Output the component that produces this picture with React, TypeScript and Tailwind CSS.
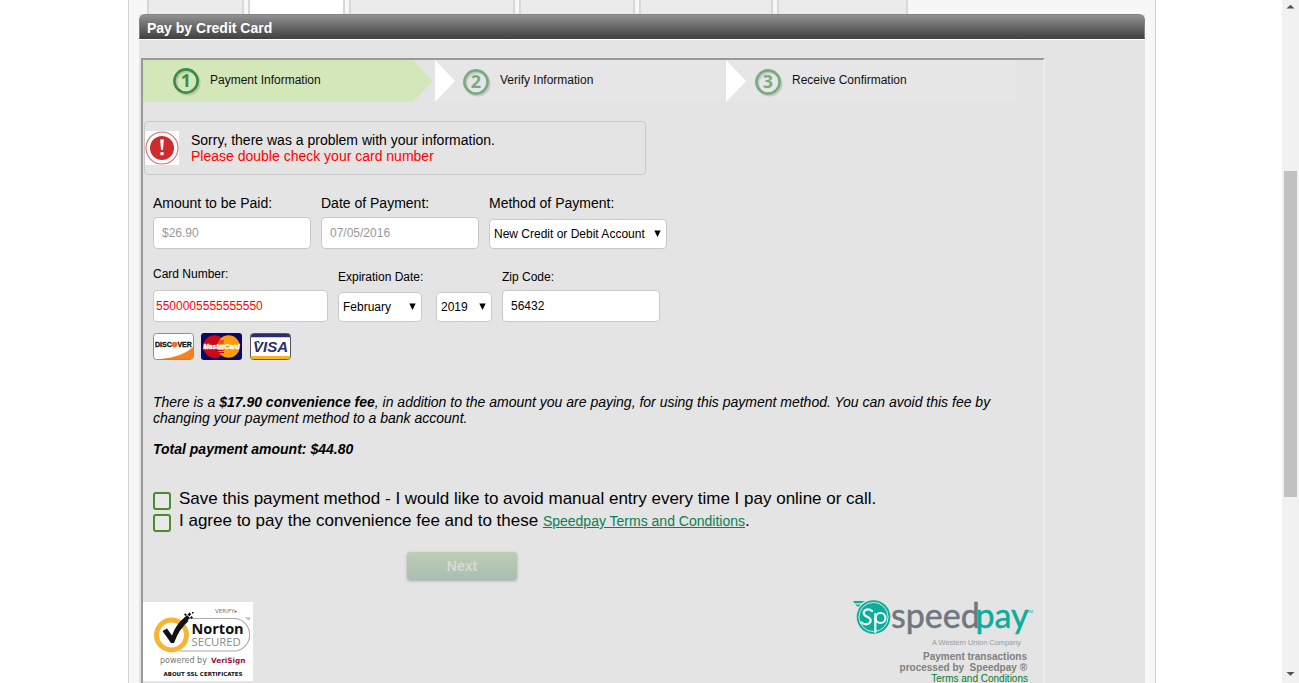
import React, { useState } from 'react';

const inputBase =
  'h-8 rounded border border-[#c9c9c9] bg-white text-[12px] leading-4 outline-none';

const tabs = [
  { id: 'tab-1', style: 'w-[97px] bg-[#ebebeb]' },
  { id: 'tab-2', style: 'w-[97px] bg-white' },
  { id: 'tab-3', style: 'w-[166px] bg-[#ebebeb]' },
  { id: 'tab-4', style: 'w-[116px] bg-[#ebebeb]' },
  { id: 'tab-5', style: 'w-[134px] bg-[#ebebeb]' },
  { id: 'tab-6', style: 'w-[131px] bg-[#ebebeb]' },
];

function StepNumber({ n, color }: { n: number; color: string }) {
  return (
    <svg width="30" height="30" viewBox="0 0 30 30" className="shrink-0" aria-hidden="true">
      <circle cx="15.5" cy="16.5" r="11.6" fill="none" stroke="#000" strokeOpacity="0.13" strokeWidth="3" />
      <circle cx="14" cy="15" r="11.6" fill="none" stroke={color} strokeWidth="2.6" />
      <text
        x="14"
        y="21.4"
        textAnchor="middle"
        fontFamily="Open Sans, Arial, sans-serif"
        fontWeight="700"
        fontSize="18"
        fill={color}
      >
        {n}
      </text>
    </svg>
  );
}

function StepArrow() {
  return (
    <svg width="20" height="42" viewBox="0 0 20 42" className="shrink-0" aria-hidden="true">
      <path d="M0 0L20 21L0 42Z" fill="#fff" />
    </svg>
  );
}

function Steps() {
  return (
    <ol className="flex h-[42px] gap-[2px] text-[12px] leading-4 text-[#111]">
      <li className="flex w-[290px] gap-[8px] bg-[#d4e7b9] pl-[29px] pt-[6px] [clip-path:polygon(0_0,270px_0,100%_50%,270px_100%,0_100%)]">
        <StepNumber n={1} color="#3d8b48" />
        <span className="pt-[6px]">Payment Information</span>
      </li>
      <li className="flex w-[289px] bg-[#e6e6e6]">
        <StepArrow />
        <div className="flex gap-[8px] pl-[7px] pt-[7px]">
          <StepNumber n={2} color="#78ab7e" />
          <span className="pt-[5px]">Verify Information</span>
        </div>
      </li>
      <li className="flex w-[289px] bg-[#e6e6e6]">
        <StepArrow />
        <div className="flex gap-[8px] pl-[8px] pt-[7px]">
          <StepNumber n={3} color="#78ab7e" />
          <span className="pt-[5px]">Receive Confirmation</span>
        </div>
      </li>
    </ol>
  );
}

function ErrorIcon() {
  return (
    <svg width="34" height="34" viewBox="0 0 34 34" className="shrink-0" aria-hidden="true">
      <rect width="34" height="34" fill="#fff" />
      <circle cx="17" cy="17" r="16" fill="none" stroke="#dd6b6d" strokeWidth="1.1" />
      <circle cx="17" cy="17" r="12" fill="#cf2a2e" />
      <path d="M15.2 8.5h3.6l-.8 10.6h-2z" fill="#fff" />
      <rect x="15.3" y="21" width="3.4" height="3.2" rx="1" fill="#fff" />
    </svg>
  );
}

type SelectProps = {
  id: string;
  label?: string;
  options: string[];
  value: string;
  width: string;
};

function Select({ id, label, options, value, width }: SelectProps) {
  const [current, setCurrent] = useState(value);
  return (
    <div className={`relative ${width}`}>
      <select
        id={id}
        aria-label={label}
        value={current}
        onChange={(e) => setCurrent(e.target.value)}
        className="block h-[30px] w-full appearance-none rounded border border-[#c9c9c9] bg-white pl-1 text-[12px] leading-4 text-black outline-none"
      >
        {options.map((o) => (
          <option key={o}>{o}</option>
        ))}
      </select>
      <svg width="7" height="7" viewBox="0 0 7 7" className="pointer-events-none absolute right-[6px] top-[11px]" aria-hidden="true">
        <path d="M0.3 0.5H6.7L3.5 7Z" fill="#000" />
      </svg>
    </div>
  );
}

function CardLogos() {
  return (
    <div className="mt-[11px] flex items-center gap-[7px]">
      <svg width="41" height="27" viewBox="0 0 41 27" role="img" aria-label="Discover">
        <rect x="0.5" y="0.5" width="40" height="26" rx="3" fill="#fff" stroke="#8d8d8d" />
        <path d="M8 26C22 24.6 33 20.5 40 14V24Q40 26 38 26Z" fill="#f58220" />
        <circle cx="21.6" cy="11.6" r="2.8" fill="#f07020" />
        <text x="2" y="14.2" fontFamily="Liberation Sans, Arial, sans-serif" fontWeight="700" fontSize="7" fill="#111" stroke="#111" strokeWidth="0.3">DISC</text>
        <text x="24.4" y="14.2" fontFamily="Liberation Sans, Arial, sans-serif" fontWeight="700" fontSize="7" fill="#111" stroke="#111" strokeWidth="0.3">VER</text>
      </svg>
      <svg width="41" height="27" viewBox="0 0 41 27" role="img" aria-label="MasterCard">
        <rect width="41" height="27" rx="3" fill="#0a0a66" />
        <circle cx="13.5" cy="13.5" r="11.2" fill="#cc0a14" />
        <circle cx="27.5" cy="13.5" r="11.2" fill="#fd9c0a" />
        <path d="M17 8h6M16.5 10h6M16.5 17.5h6M17 19.5h6" stroke="#cc0a14" strokeWidth="1" />
        <text x="20.5" y="16.2" textAnchor="middle" fontFamily="Liberation Sans, Arial, sans-serif" fontWeight="700" fontStyle="italic" fontSize="6.6" fill="#fff" stroke="#fff" strokeWidth="0.4">MasterCard</text>
      </svg>
      <svg width="41" height="27" viewBox="0 0 41 27" className="ml-px" role="img" aria-label="Visa">
        <rect x="0.5" y="0.5" width="40" height="26" rx="3" fill="#fff" stroke="#555" />
        <path d="M1 4.2V3Q1 1 3 1H38Q40 1 40 3V4.2Z" fill="#2b2d70" />
        <path d="M1 23H40V24Q40 26 38 26H3Q1 26 1 24Z" fill="#f7b51b" />
        <text x="20.5" y="18.8" textAnchor="middle" fontFamily="Liberation Sans, Arial, sans-serif" fontWeight="700" fontStyle="italic" fontSize="15" fill="#2b2d70">VISA</text>
        <path d="M4 8h5l1 3q-2-2.4-6-3z" fill="#2b2d70" />
      </svg>
    </div>
  );
}

function NortonSeal() {
  return (
    <svg width="110" height="79" viewBox="0 0 110 79" role="img" aria-label="Norton Secured, powered by VeriSign">
      <rect width="110" height="79" fill="#fff" />
      <path d="M44 16.5H93A16.5 16.5 0 0 1 93 49H36" fill="none" stroke="#aaa" strokeWidth="1.1" />
      <circle cx="28.5" cy="33" r="15" fill="#fff" stroke="#f3b735" strokeWidth="5" />
      <path d="M19.5 29L24 26.5L29 33.5Q33 22 41.5 15.5L45.5 19Q36 27 31 41H28Z" fill="#111" />
      <path d="M41 16l3-3 3 3-3 3zM44.5 12.5l2-2 1.8 1.8-2 2zM47 15.5l1.5-1.5 1.5 1.5-1.5 1.5zM41 12.5l1.5-1.3 1.3 1.3-1.5 1.5zM49 10h1.6v1.6H49z" fill="#111" />
      <g fontFamily="Liberation Sans, Arial, sans-serif">
        <text x="72" y="11" fontFamily="DejaVu Sans, sans-serif" fontSize="5.6" fill="#777">VERIFY▸</text>
        <text x="48.5" y="32" fontFamily="Open Sans, sans-serif" fontWeight="700" fontSize="14.5" fill="#111">Norton</text>
        <text x="48.5" y="43.5" fontFamily="Open Sans, sans-serif" fontSize="11.3" fill="#8a8a8a">SECURED</text>
        <text x="102" y="18" fontSize="3.5" fill="#777">TM</text>
        <text x="17" y="61" fontFamily="DejaVu Sans, sans-serif" fontSize="8" fill="#777">powered by</text>
        <text x="68" y="61" fontFamily="DejaVu Sans, sans-serif" fontWeight="700" fontSize="7.3" fill="#a3123f">VeriSign</text>
        <text x="20.5" y="73.5" fontFamily="DejaVu Sans, sans-serif" fontWeight="700" fontSize="5.5" fill="#111">ABOUT SSL CERTIFICATES</text>
      </g>
    </svg>
  );
}

function SpeedpayLogo() {
  return (
    <svg width="182" height="48" viewBox="0 0 182 48" role="img" aria-label="Speedpay, A Western Union Company">
      <circle cx="20.5" cy="17" r="16.8" fill="#0cae9b" />
      <circle cx="20.5" cy="17" r="14.6" fill="none" stroke="#e4e4e4" strokeWidth="1" />
      <path d="M0 1H12L8 3.2H1.5ZM2.5 4.6H7.5L6 6.6H4Z" fill="#0cae9b" />
      <g fill="none" stroke="#f3fbfa" strokeWidth="2.2" strokeLinecap="round">
        <path d="M19 11Q16 8.6 12.5 10Q9 12.5 12 15.5L16.5 18Q19 21 16 23.5Q12 25.5 8.5 22.5" />
        <path d="M22.3 14V32" />
        <circle cx="27.5" cy="18" r="5" />
      </g>
      <g fontFamily="Lato, sans-serif" strokeWidth="0.5">
        <text x="38" y="27.5" fontSize="34" fill="#6f7780" stroke="#6f7780">speed</text>
        <text x="122.5" y="27.5" fontSize="34" fill="#0cae9b" stroke="#0cae9b">pay</text>
      </g>
      <text x="174" y="13" fontFamily="Liberation Sans, Arial, sans-serif" fontSize="4" fill="#0cae9b">SM</text>
      <text x="79" y="45" fontFamily="Liberation Sans, Arial, sans-serif" fontSize="7.4" fill="#999">A Western Union Company</text>
    </svg>
  );
}

function Scrollbar() {
  return (
    <div className="flex w-[17px] shrink-0 flex-col items-center bg-[#f1f1f1]" aria-hidden="true">
      <svg width="17" height="17" viewBox="0 0 17 17" className="shrink-0">
        <path d="M4.5 8.5L8.5 4.8L12.5 8.5Z" fill="#505050" />
      </svg>
      <div className="grow-[154] basis-0" />
      <div className="w-[13px] grow-[326] basis-0 bg-[#c1c1c1]" />
      <div className="grow-[169] basis-0" />
      <svg width="17" height="17" viewBox="0 0 17 17" className="shrink-0">
        <path d="M4.5 6L8.5 9.7L12.5 6Z" fill="#505050" />
      </svg>
    </div>
  );
}

const checkboxStyle =
  'size-[18px] shrink-0 appearance-none rounded-[3px] border-2 border-[#4b8b2c] bg-[#e9e9e9] checked:bg-[#4b8b2c]';

function PaymentForm() {
  const [card, setCard] = useState('5500005555555550');
  const [zip, setZip] = useState('56432');
  return (
    <form className="pl-[10px]" onSubmit={(e) => e.preventDefault()}>
      <div className="mt-5 flex gap-[10px] text-[14px] leading-4">
        <div className="flex w-[158px] flex-col gap-[6px]">
          <label htmlFor="amount">Amount to be Paid:</label>
          <input id="amount" readOnly value="$26.90" className={`${inputBase} w-full px-2 text-[#999]`} />
        </div>
        <div className="flex w-[158px] flex-col gap-[6px]">
          <label htmlFor="date">Date of Payment:</label>
          <input id="date" readOnly value="07/05/2016" className={`${inputBase} w-full px-2 text-[#999]`} />
        </div>
        <div className="flex flex-col gap-2">
          <label htmlFor="method">Method of Payment:</label>
          <Select
            id="method"
            width="w-[178px]"
            value="New Credit or Debit Account"
            options={['New Credit or Debit Account', 'New Bank Account']}
          />
        </div>
      </div>

      <div className="mt-[17px] flex items-end gap-[10px] text-[12px] leading-4">
        <div className="flex w-[175px] flex-col gap-2">
          <label htmlFor="card">Card Number:</label>
          <input
            id="card"
            value={card}
            onChange={(e) => setCard(e.target.value)}
            className={`${inputBase} w-full px-[2px] text-[#f00]`}
          />
        </div>
        <div className="flex flex-col gap-[7px]">
          <label htmlFor="month">Expiration Date:</label>
          <div className="flex gap-[14px]">
            <Select id="month" width="w-[84px]" value="February" options={['January', 'February', 'March', 'April']} />
            <Select id="year" label="Expiration year" width="w-[56px]" value="2019" options={['2018', '2019', '2020']} />
          </div>
        </div>
        <div className="flex w-[158px] flex-col gap-[5px]">
          <label htmlFor="zip">Zip Code:</label>
          <input
            id="zip"
            value={zip}
            onChange={(e) => setZip(e.target.value)}
            className={`${inputBase} w-full px-2 text-black`}
          />
        </div>
      </div>

      <CardLogos />

      <p className="mt-[34px] max-w-[866px] text-[14px] italic leading-4">
        There is a <b>$17.90 convenience fee</b>, in addition to the amount you are paying, for using this payment
        method. You can avoid this fee by changing your payment method to a bank account.
      </p>
      <p className="mt-[15px] text-[14px] font-bold italic leading-4">Total payment amount: $44.80</p>

      <div className="mt-[31px] text-[17px] leading-[22px]">
        <div className="flex gap-2">
          <input id="save" type="checkbox" className={`${checkboxStyle} mt-1`} />
          <label htmlFor="save">
            Save this payment method - I would like to avoid manual entry every time I pay online or call.
          </label>
        </div>
        <div className="flex gap-2">
          <input id="agree" type="checkbox" className={`${checkboxStyle} mt-1`} />
          <div>
            <label htmlFor="agree">I agree to pay the convenience fee and to these </label>
            <a href="#terms" className="text-[14px] text-[#0a8050] underline">
              Speedpay Terms and Conditions
            </a>
            .
          </div>
        </div>
      </div>

      <button
        type="submit"
        className="ml-[254px] mt-5 block h-7 w-[110px] rounded-[3px] bg-linear-to-b from-[#bfcdb2] to-[#a8bfb2] text-[14px] font-bold text-[#d5dbd3] shadow-[0_1px_3px_#0004]"
      >
        Next
      </button>
    </form>
  );
}

export default function App() {
  return (
    <div className="flex h-screen overflow-hidden bg-white font-['Liberation_Sans',Arial,sans-serif] text-black">
      <main className="min-w-0 flex-1 overflow-hidden pl-[2px]">
        <div className="mx-auto min-h-screen w-full max-w-[1028px] border-x border-[#d5d5d5] bg-[#f7f7f7] px-[10px]">
          <nav className="flex h-[14px] gap-1 pl-2" aria-label="Sections">
            {tabs.map((t) => (
              <a key={t.id} href={`#${t.id}`} aria-label={t.id} className={`border-x-2 border-[#d8d8d8] ${t.style}`} />
            ))}
          </nav>
          <section className="bg-[#e4e4e4]">
            <h1 className="flex h-[25px] items-center rounded-t-[6px] border border-b-2 border-[#838383] border-b-[#444] bg-linear-to-b from-[#929292] to-[#464646] pl-[7px] pt-[3px] text-[14px] font-bold leading-4 text-white">
              Pay by Credit Card
            </h1>
            <div className="border-t border-white pl-[2px] pt-[18px]">
              <div className="w-full max-w-[904px] border-l-2 border-r-2 border-t-2 border-[#999] border-r-[#ececec]">
                <Steps />
                <div
                  role="alert"
                  className="ml-px mt-[19px] flex h-[54px] max-w-[502px] items-center gap-3 rounded border border-[#cacaca] text-[14px] leading-4"
                >
                  <ErrorIcon />
                  <div>
                    <p>Sorry, there was a problem with your information.</p>
                    <p className="text-[#f00]">Please double check your card number</p>
                  </div>
                </div>
                <PaymentForm />
                <footer className="mt-5 flex items-start justify-between">
                  <div className="pt-[2px]">
                    <NortonSeal />
                  </div>
                  <div className="flex flex-col items-end pr-2 text-[10px] leading-[11px]">
                    <SpeedpayLogo />
                    <p className="mt-[3px] pr-2 text-right font-bold text-[#808080]">
                      Payment transactions
                      <br />
                      processed by&nbsp; Speedpay ®
                    </p>
                    <a href="#speedpay-terms" className="pr-[7px] text-[#0a7a2a]">
                      Terms and Conditions
                    </a>
                  </div>
                </footer>
              </div>
            </div>
          </section>
        </div>
      </main>
      <Scrollbar />
    </div>
  );
}
